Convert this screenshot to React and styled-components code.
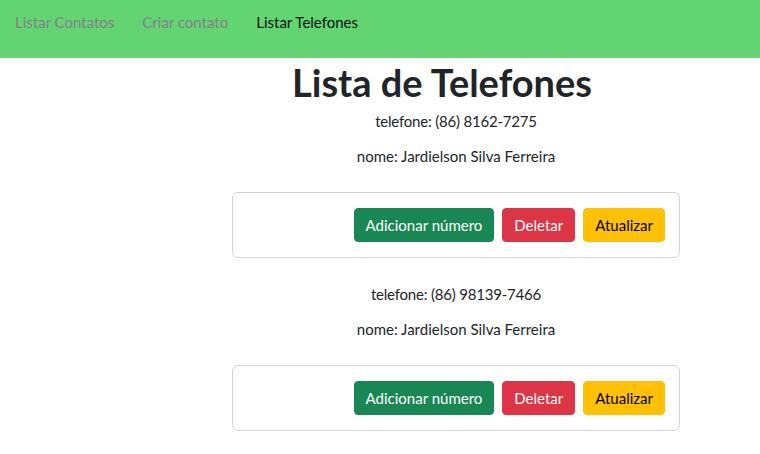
import React from "react";
import styled, { createGlobalStyle } from "styled-components";

const GlobalStyle = createGlobalStyle`
  body {
    margin: 0;
    font-family: "Lato", "Open Sans", sans-serif;
    font-size: 16px;
    color: #212529;
    background: #fff;
  }
`;

const NavBar = styled.nav`
  height: 58px;
  background: #63d472;
  display: flex;
  align-items: flex-start;
  gap: 28px;
  padding: 12px 15px 0;
  box-sizing: border-box;
`;

const NavLink = styled.a`
  font-size: 15px;
  line-height: 20px;
  color: ${(p) => (p.$active ? "#111" : "#85808a")};
  text-decoration: none;
  cursor: pointer;
`;

const Main = styled.main`
  width: 448px;
  margin-left: 232px;
  display: flex;
  flex-direction: column;
  align-items: center;
`;

const Title = styled.h1`
  margin: 0 28px 3px 0;
  font-size: 38px;
  font-weight: 700;
  line-height: 48px;
`;

const Line = styled.p`
  margin: 0 0 ${(p) => (p.$last ? "24px" : "11px")};
  line-height: 24px;
  font-size: 15px;
  text-align: center;
  letter-spacing: ${(p) => (p.$last ? "0" : "-0.2px")};
`;

const Card = styled.div`
  align-self: stretch;
  border: 1px solid #ced4da;
  border-radius: 6px;
  padding: 15px 14px;
  margin-bottom: 24px;
  display: flex;
  justify-content: flex-end;
  gap: 8px;
`;

const colors = {
  success: { bg: "#198754", fg: "#fff" },
  danger: { bg: "#dc3545", fg: "#fff" },
  warning: { bg: "#ffc107", fg: "#000" },
};

const Button = styled.button`
  font-family: inherit;
  font-size: 15px;
  line-height: 20px;
  padding: 6px 11px;
  border: 1px solid ${(p) => colors[p.$variant].bg};
  border-radius: 4px;
  background: ${(p) => colors[p.$variant].bg};
  color: ${(p) => colors[p.$variant].fg};
  cursor: pointer;
`;

const phones = [
  { numero: "(86) 8162-7275", nome: "Jardielson Silva Ferreira" },
  { numero: "(86) 98139-7466", nome: "Jardielson Silva Ferreira" },
];

export default function App() {
  return (
    <>
      <GlobalStyle />
      <NavBar>
        <NavLink>Listar Contatos</NavLink>
        <NavLink>Criar contato</NavLink>
        <NavLink $active>Listar Telefones</NavLink>
      </NavBar>
      <Main>
        <Title>Lista de Telefones</Title>
        {phones.map((t, i) => (
          <React.Fragment key={i}>
            <Line>telefone: {t.numero}</Line>
            <Line $last>nome: {t.nome}</Line>
            <Card>
              <Button $variant="success">Adicionar número</Button>
              <Button $variant="danger">Deletar</Button>
              <Button $variant="warning">Atualizar</Button>
            </Card>
          </React.Fragment>
        ))}
      </Main>
    </>
  );
}
